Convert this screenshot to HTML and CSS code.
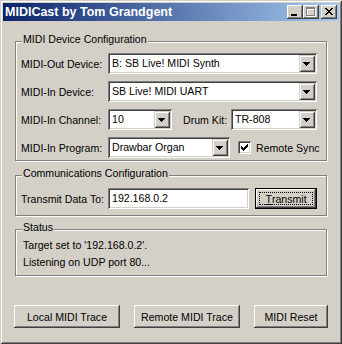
FILE: index.html
```html
<!DOCTYPE html>
<html lang="en">
<head>
    <meta charset="UTF-8">
    <title>MIDICast by Tom Grandgent</title>
    <link rel="stylesheet" href="styles.css">
</head>
<body>
    <div class="window">
        <!-- Title bar -->
        <div class="titlebar">
            <span class="title">MIDICast by Tom Grandgent</span>
            <div class="caption-buttons">
                <span class="cap-btn">
                    <svg width="16" height="14" shape-rendering="crispEdges"><rect x="4" y="9" width="6" height="2" fill="#000"/></svg>
                </span>
                <span class="cap-btn">
                    <svg width="16" height="14" shape-rendering="crispEdges">
                        <path d="M4 3h9v9H4z M5 5v6h7V5z" fill="#fff" fill-rule="evenodd"/>
                        <path d="M3 2h9v9H3z M4 4v6h7V4z" fill="#808080" fill-rule="evenodd"/>
                    </svg>
                </span>
                <span class="cap-btn close">
                    <svg width="16" height="14" shape-rendering="crispEdges">
                        <path d="M4 3h2v1h-2z M10 3h2v1h-2z M5 4h2v1h-2z M9 4h2v1h-2z M6 5h4v1h-4z M7 6h2v1h-2z M6 7h4v1h-4z M5 8h2v1h-2z M9 8h2v1h-2z M4 9h2v1h-2z M10 9h2v1h-2z" fill="#000"/>
                    </svg>
                </span>
            </div>
        </div>

        <div class="client">
            <!-- MIDI device group -->
            <div class="group group-device">
                <div class="legend">MIDI Device Configuration</div>
                <div class="rows">
                    <div class="row">
                        <span class="field-label">MIDI-Out Device:</span>
                        <div class="combo sunken grow">
                            <span class="combo-text">B: SB Live! MIDI Synth</span>
                            <span class="combo-btn"><svg width="7" height="4" shape-rendering="crispEdges"><path d="M0 0h7v1H0z M1 1h5v1H1z M2 2h3v1H2z M3 3h1v1H3z" fill="#000"/></svg></span>
                        </div>
                    </div>
                    <div class="row">
                        <span class="field-label">MIDI-In Device:</span>
                        <div class="combo sunken grow">
                            <span class="combo-text">SB Live! MIDI UART</span>
                            <span class="combo-btn"><svg width="7" height="4" shape-rendering="crispEdges"><path d="M0 0h7v1H0z M1 1h5v1H1z M2 2h3v1H2z M3 3h1v1H3z" fill="#000"/></svg></span>
                        </div>
                    </div>
                    <div class="row">
                        <span class="field-label">MIDI-In Channel:</span>
                        <div class="combo sunken combo-channel">
                            <span class="combo-text">10</span>
                            <span class="combo-btn"><svg width="7" height="4" shape-rendering="crispEdges"><path d="M0 0h7v1H0z M1 1h5v1H1z M2 2h3v1H2z M3 3h1v1H3z" fill="#000"/></svg></span>
                        </div>
                        <span class="drum-label">Drum Kit:</span>
                        <div class="combo sunken grow">
                            <span class="combo-text">TR-808</span>
                            <span class="combo-btn"><svg width="7" height="4" shape-rendering="crispEdges"><path d="M0 0h7v1H0z M1 1h5v1H1z M2 2h3v1H2z M3 3h1v1H3z" fill="#000"/></svg></span>
                        </div>
                    </div>
                    <div class="row">
                        <span class="field-label">MIDI-In Program:</span>
                        <div class="combo sunken combo-program">
                            <span class="combo-text">Drawbar Organ</span>
                            <span class="combo-btn"><svg width="7" height="4" shape-rendering="crispEdges"><path d="M0 0h7v1H0z M1 1h5v1H1z M2 2h3v1H2z M3 3h1v1H3z" fill="#000"/></svg></span>
                        </div>
                        <span class="check sunken">
                            <svg width="9" height="9" shape-rendering="crispEdges"><path d="M1 3h1v3H1z M2 4h1v3H2z M3 5h1v3H3z M4 4h1v3H4z M5 3h1v3H5z M6 2h1v3H6z M7 1h1v3H7z" fill="#000"/></svg>
                        </span>
                        <span class="check-label">Remote Sync</span>
                    </div>
                </div>
            </div>

            <!-- Communications group -->
            <div class="group group-comm">
                <div class="legend">Communications Configuration</div>
                <div class="row comm-row">
                    <span class="field-label">Transmit Data To:</span>
                    <div class="text-input sunken">192.168.0.2</div>
                    <button class="btn btn-default"><span class="focus-ring"><u>T</u>ransmit</span></button>
                </div>
            </div>

            <!-- Status group -->
            <div class="group group-status">
                <div class="legend">Status</div>
                <div class="status-lines">
                    <div>Target set to '192.168.0.2'.</div>
                    <div>Listening on UDP port 80...</div>
                </div>
            </div>

            <div class="button-row">
                <button class="btn btn-trace">Local MIDI Trace</button>
                <button class="btn btn-trace">Remote MIDI Trace</button>
                <button class="btn btn-reset">MIDI Reset</button>
            </div>
        </div>
    </div>
</body>
</html>
```

FILE: styles.css
```css
body {
    margin: 0;
    font-family: "Liberation Sans", Arial, sans-serif;
    font-size: 10.6px;
    color: #000;
    background: #d4d0c8;
}

.window {
    width: 342px;
    height: 344px;
    box-sizing: border-box;
    padding: 3px;
    background: #d4d0c8;
    box-shadow: inset 1px 1px #d4d0c8, inset -1px -1px #404040, inset 2px 2px #fff, inset -2px -2px #808080;
    display: flex;
    flex-direction: column;
}

/* Title bar */
.titlebar {
    height: 18px;
    display: flex;
    align-items: center;
    padding: 0 2px;
    background: linear-gradient(to right, #0a246a, #a6caf0);
    color: #fff;
    font-weight: bold;
    font-size: 12.5px;
}

.title {
    flex: 1;
    white-space: nowrap;
}

.caption-buttons {
    display: flex;
}

.cap-btn {
    width: 16px;
    height: 14px;
    background: #d4d0c8;
    box-shadow: inset -1px -1px #404040, inset 1px 1px #fff, inset -2px -2px #808080, inset 2px 2px #d4d0c8;
}

.cap-btn svg {
    display: block;
}

.cap-btn.close {
    margin-left: 2px;
}

/* Client area */
.client {
    flex: 1;
    display: flex;
    flex-direction: column;
}

.group {
    margin: 0 12px;
    padding: 0 9px 0 5px;
    border: 1px solid #808080;
    box-shadow: 1px 1px #fff, inset 1px 1px #fff;
    display: flex;
    flex-direction: column;
}

.legend {
    align-self: flex-start;
    margin: -9px 0 0 1px;
    padding: 0 1px;
    line-height: 13px;
    background: #d4d0c8;
    white-space: nowrap;
}

.group-device {
    margin-top: 20px;
    padding-bottom: 2px;
}

.group-comm {
    margin-top: 14px;
    padding-bottom: 6px;
}

.group-status {
    margin-top: 13px;
    padding-bottom: 4px;
}

.rows {
    margin-top: 7px;
    display: flex;
    flex-direction: column;
    gap: 7px;
}

.row {
    display: flex;
    align-items: center;
    height: 21px;
}

.field-label {
    width: 87px;
    flex: none;
    white-space: nowrap;
}

.sunken {
    box-sizing: border-box;
    background: #fff;
    box-shadow: inset 1px 1px #808080, inset -1px -1px #fff, inset 2px 2px #404040, inset -2px -2px #d4d0c8;
}

/* Combo boxes */
.combo {
    height: 21px;
    padding: 2px;
    display: flex;
}

.grow {
    flex: 1;
}

.combo-channel {
    width: 64px;
    flex: none;
}

.combo-program {
    width: 122px;
    flex: none;
}

.combo-text {
    flex: 1;
    padding-left: 2px;
    line-height: 17px;
    white-space: nowrap;
    overflow: hidden;
}

.combo-btn {
    width: 16px;
    height: 17px;
    background: #d4d0c8;
    box-shadow: inset 1px 1px #d4d0c8, inset -1px -1px #404040, inset 2px 2px #fff, inset -2px -2px #808080;
}

.combo-btn svg {
    display: block;
    margin: 7px 0 0 4px;
}

.drum-label {
    margin-left: 11px;
    width: 48px;
    flex: none;
    white-space: nowrap;
}

/* Checkbox */
.check {
    width: 13px;
    height: 13px;
    margin-left: 8px;
    padding: 2px;
    flex: none;
}

.check svg {
    display: block;
}

.check-label {
    margin-left: 5px;
    white-space: nowrap;
}

/* Communications */
.comm-row {
    margin-top: 8px;
}

.text-input {
    width: 144px;
    height: 21px;
    padding-left: 4px;
    line-height: 21px;
}

/* Buttons */
.btn {
    height: 23px;
    box-sizing: border-box;
    padding: 0;
    border: 0;
    font: inherit;
    color: #000;
    background: #d4d0c8;
    box-shadow: inset -1px -1px #404040, inset 1px 1px #fff, inset -2px -2px #808080, inset 2px 2px #d4d0c8;
    display: flex;
    align-items: center;
    justify-content: center;
}

.btn-default {
    width: 63px;
    height: 21px;
    margin-left: 6px;
    padding: 3px;
    border: 1px solid #000;
}

.focus-ring {
    flex: 1;
    align-self: stretch;
    display: flex;
    align-items: center;
    justify-content: center;
    border: 1px dotted #000;
}

.status-lines {
    margin-top: 3px;
    padding-left: 2px;
    line-height: 17px;
}

.button-row {
    margin: 29px 11px 0;
    display: flex;
    justify-content: space-between;
}

.btn-trace {
    width: 106px;
}

.btn-reset {
    width: 74px;
}
```
